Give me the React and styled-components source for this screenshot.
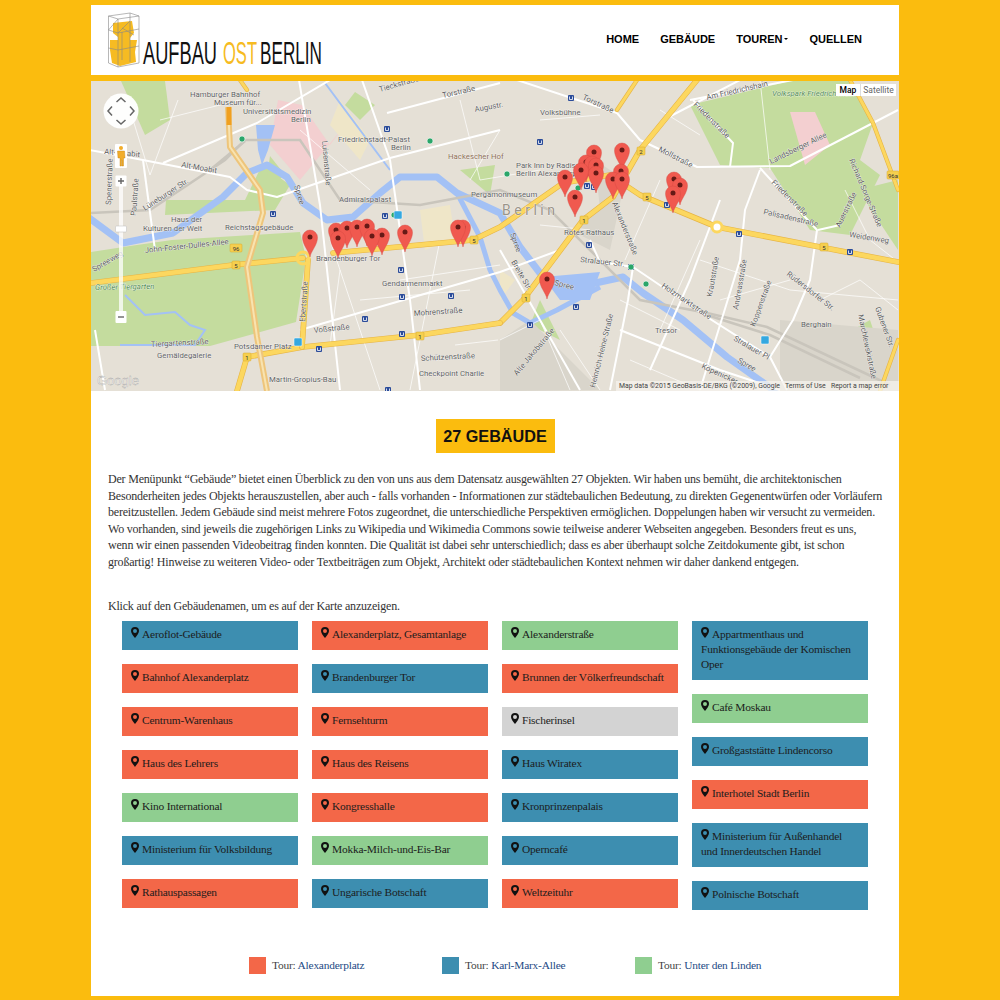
import React from "react";
import styled, { createGlobalStyle } from "styled-components";

const YELLOW = "#fbbc0e";
const COLORS = { o: "#f36748", b: "#3d8eb0", g: "#8fce90", x: "#d3d3d3" };

const Global = createGlobalStyle`
  html, body { margin: 0; padding: 0; background: ${YELLOW}; }
  body { font-family: "Liberation Serif", serif; }
`;
const Page = styled.div`
  width: 808px;
  margin-left: 91px;
  padding-top: 5px;
`;
const Header = styled.header`
  height: 70px;
  background: #fff;
  display: flex;
  align-items: center;
  justify-content: space-between;
  padding: 0 37px 0 17px;
`;
const Nav = styled.nav`
  display: flex;
  gap: 21px;
  margin-bottom: 2px;
`;
const NavLink = styled.a`
  font: bold 11px/16px "Liberation Sans", sans-serif;
  color: #000;
  display: flex;
  align-items: center;
  gap: 2px;
`;
const Caret = styled.span`
  width: 0;
  height: 0;
  border-left: 2.5px solid transparent;
  border-right: 2.5px solid transparent;
  border-top: 2.5px solid #000;
`;
const MapBox = styled.div`
  position: relative;
  height: 310px;
  margin-top: 6px;
  overflow: hidden;
  background: #e5e0d6;
`;
const MapSvg = styled.svg`
  display: block;
`;
const MapTypes = styled.div`
  position: absolute;
  top: 3px;
  right: 3px;
  display: flex;
  background: #fff;
  font: 8.5px/12px Roboto, sans-serif;
  text-align: center;
`;
const MapType = styled.span`
  width: ${(p) => (p.$on ? "24px" : "36px")};
  color: ${(p) => (p.$on ? "#000" : "#666")};
  font-weight: ${(p) => (p.$on ? 500 : 400)};
  border-left: ${(p) => (p.$on ? "0" : "1px solid #ddd")};
  box-sizing: border-box;
`;
const Attribution = styled.div`
  position: absolute;
  right: 0;
  bottom: 0;
  height: 10px;
  width: 283px;
  padding-left: 3px;
  box-sizing: border-box;
  background: rgba(245, 243, 238, 0.75);
  font: 6.9px/10px Roboto, sans-serif;
  color: #444;
  white-space: nowrap;
`;
const Content = styled.main`
  background: #fff;
  height: 605px;
  padding-top: 28px;
  box-sizing: border-box;
`;
const TitleRow = styled.div`
  display: flex;
  justify-content: center;
`;
const Title = styled.h1`
  margin: 0;
  height: 34px;
  width: 119px;
  background: ${YELLOW};
  font: bold 16.2px/35px "Liberation Sans", sans-serif;
  color: #111;
  text-align: center;
`;
const Intro = styled.p`
  margin: 18px 0 0 17px;
  font-size: 12px;
  letter-spacing: -0.2px;
  line-height: 16.6px;
  color: #333;
  white-space: nowrap;
`;
const Hint = styled.p`
  margin: 27px 0 0 17px;
  font-size: 12px;
  letter-spacing: -0.2px;
  line-height: 16px;
  color: #333;
`;
const Columns = styled.div`
  display: flex;
  gap: 14px;
  margin: 7px 0 0 31px;
`;
const Column = styled.div`
  width: 176px;
  display: flex;
  flex-direction: column;
  gap: 14px;
`;
const Building = styled.a`
  display: block;
  background: ${(p) => COLORS[p.$c]};
  padding: 6.500px 9px 7.500px;
  font-size: 11.4px;
  letter-spacing: -0.2px;
  line-height: 15px;
  color: #1c1c1c;
  box-sizing: border-box;
`;
const PinIcon = styled.svg`
  width: 8px;
  height: 11px;
  margin-right: 3px;
  vertical-align: 0;
`;
const Legend = styled.div`
  display: flex;
  margin: 47px 0 0 158px;
`;
const LegendItem = styled.div`
  width: 193px;
  display: flex;
  align-items: center;
  gap: 6px;
  font-size: 11.4px;
  letter-spacing: -0.2px;
  color: #444;
`;
const Swatch = styled.span`
  width: 17px;
  height: 17px;
  background: ${(p) => COLORS[p.$c]};
`;
const TourLink = styled.a`
  color: #1d4a85;
`;

const columns = [
  [["Aeroflot-Gebäude","b"],["Bahnhof Alexanderplatz","o"],["Centrum-Warenhaus","o"],["Haus des Lehrers","o"],["Kino International","g"],["Ministerium für Volksbildung","b"],["Rathauspassagen","o"]],
  [["Alexanderplatz, Gesamtanlage","o"],["Brandenburger Tor","b"],["Fernsehturm","o"],["Haus des Reisens","o"],["Kongresshalle","o"],["Mokka-Milch-und-Eis-Bar","g"],["Ungarische Botschaft","b"]],
  [["Alexanderstraße","g"],["Brunnen der Völkerfreundschaft","o"],["Fischerinsel","x"],["Haus Wiratex","b"],["Kronprinzenpalais","b"],["Operncafé","b"],["Weltzeituhr","o"]],
  [["Appartmenthaus und Funktionsgebäude der Komischen Oper","b"],["Café Moskau","g"],["Großgaststätte Lindencorso","b"],["Interhotel Stadt Berlin","o"],["Ministerium für Außenhandel und Innerdeutschen Handel","b"],["Polnische Botschaft","b"]],
];

const introLines = [
  "Der Menüpunkt “Gebäude” bietet einen Überblick zu den von uns aus dem Datensatz ausgewählten 27 Objekten. Wir haben uns bemüht, die architektonischen",
  "Besonderheiten jedes Objekts herauszustellen, aber auch - falls vorhanden - Informationen zur städtebaulichen Bedeutung, zu direkten Gegenentwürfen oder Vorläufern",
  "bereitzustellen. Jedem Gebäude sind meist mehrere Fotos zugeordnet, die unterschiedliche Perspektiven ermöglichen. Doppelungen haben wir versucht zu vermeiden.",
  "Wo vorhanden, sind jeweils die zugehörigen Links zu Wikipedia und Wikimedia Commons sowie teilweise anderer Webseiten angegeben. Besonders freut es uns,",
  "wenn wir einen passenden Videobeitrag finden konnten. Die Qualität ist dabei sehr unterschiedlich; dass es aber überhaupt solche Zeitdokumente gibt, ist schon",
  "großartig! Hinweise zu weiteren Video- oder Textbeiträgen zum Objekt, Architekt oder städtebaulichen Kontext nehmen wir daher dankend entgegen.",
];

const Pin = () => (
  <PinIcon viewBox="0 0 8 11">
    <path fillRule="evenodd" fill="#111" d="M4 0a4 4 0 0 0-4 4c0 2.400 2.600 5 4 7 1.400-2 4-4.600 4-7a4 4 0 0 0-4-4zm0 2a2 2 0 1 1 0 4 2 2 0 0 1 0-4z" />
  </PinIcon>
);

const Logo = () => (
  <svg width="220" height="60" viewBox="108 10 220 60">
    <path fill="#f6bb22" d="M113 23L132 21L134 33L130 38L130 40L137 40L135 52L136 62L120 66L112 63L110 50L110 40L118 40L118 37L113 33z" />
    <g fill="none" stroke="#888" strokeWidth=".6">
      <path d="M108.500 16L130 13L139 16V63L118 67L108.500 63z" />
      <path d="M108.500 16L118 19L139 16M118 19V67M130 13V62M108.500 30L118 33L139 29M108.500 48L118 50L139 46M118 19L108.500 30M118 33L130 21M122 28L134 35M122 32V60" />
    </g>
    <g fontFamily="'Liberation Sans', sans-serif" fontSize="31.500">
      <text x="143" y="64" fill="#111" textLength="74" lengthAdjust="spacingAndGlyphs">AUFBAU</text>
      <text x="223" y="64" fill="#f6bb22" textLength="34" lengthAdjust="spacingAndGlyphs">OST</text>
      <text x="260" y="64" fill="#111" textLength="62" lengthAdjust="spacingAndGlyphs">BERLIN</text>
    </g>
  </svg>
);

const Road = ({ d, w = 4.5 }) => (
  <g fill="none" strokeLinecap="round" strokeLinejoin="round">
    <path d={d} stroke="#e6b445" strokeWidth={w + 1.2} />
    <path d={d} stroke="#fcd75f" strokeWidth={w} />
  </g>
);

const whites = [
  "M90 150L143 160L230 177L247 190L277 197L390 158L500 130",
  "M163 163L257 123L330 80",
  "M387 113L500 83",
  "M517 80L617 113L640 140L697 167L790 166L898 110",
  "M690 100L793 80",
  "M693 100L733 143L730 167",
  "M760 168L817 230L810 280L793 320L770 357",
  "M633 267L707 317L770 357L787 390",
  "M590 240L600 262L633 267",
  "M633 267L628 300L610 390",
  "M143 160L155 250",
  "M299 80L320 205L340 390",
  "M362 80L390 160L410 300L420 390",
  "M500 250L580 390",
  "M300 330L500 272L560 250",
  "M720 200L690 280L650 370",
  "M95 330L105 390",
  "M663 120L740 80",
  "M840 225L818 230",
  "M760 170L745 210L740 260L700 390",
  "M620 330L720 370L780 390",
];
const thin = [
  "M330 240L380 390","M440 240L410 390","M130 110L150 175L178 100","M160 120L240 100","M300 130L370 190","M460 100L480 180L540 170",
  "M700 260L790 290L898 300","M820 300L860 280L898 310","M560 330L600 390","M500 340L540 320L570 390","M660 180L625 260","M700 240L660 330",
  "M720 300L790 280","M400 280L500 265","M340 270L330 345","M360 300L470 290","M455 345L498 340","M630 360L700 390","M620 300L680 330",
  "M845 190L870 240L898 262","M540 225L590 230","M600 115L540 120","M760 80L770 170","M470 180L500 130","M660 110L700 135",
];

const Label = ({ x, y, r, s = 7.8, c = "#5d5d5d", ls, it, children }) => (
  <text x={x} y={y} fontSize={s} fill={c} letterSpacing={ls} fontStyle={it ? "italic" : undefined} stroke="#fff" strokeWidth=".5" paintOrder="stroke"
    transform={r ? `rotate(${r} ${x} ${y})` : undefined}>{children}</text>
);

const labels = [
  [190,97,0,"Hamburger Bahnhof"],[214,105,0,"Museum für..."],[243,114,0,"Universitätsmedizin"],[291,122,0,"Berlin"],
  [338,142,0,"Friedrichstadt-Palast"],[391,150,0,"Berlin"],[339,202,0,"Admiralspalast"],
  [471,197,0,"Pergamonmuseum"],[171,222,0,"Haus der"],[143,231,0,"Kulturen der Welt"],[225,230,0,"Reichstagsgebäude"],
  [316,261,0,"Brandenburger Tor"],[382,286,0,"Gendarmenmarkt"],[414,316,-4,"Mohrenstraße"],[314,333,-6,"Voßstraße"],
  [151,347,-3,"Tiergartenstraße"],[157,358,0,"Gemäldegalerie"],[234,349,0,"Potsdamer Platz"],[421,361,-3,"Schützenstraße"],
  [419,376,0,"Checkpoint Charlie"],[269,382,0,"Martin-Gropius-Bau"],[104,154,5,"Alt-Moabit"],
  [181,167,10,"Alt-Moabit"],[145,211,-33,"Lüneburger Str."],[145,253,-6,"John-Foster-Dulles-Allee"],[94,272,-30,"Spreeweg"],
  [305,322,-86,"Ebertstraße"],[322,141,85,"Luisenstraße"],[294,186,72,"Spree"],[136,216,-86,"Paulstraße"],
  [111,205,-88,"Spenerstraße"],[380,92,-16,"Tieckstraße"],[443,98,-13,"Torstraße"],[475,112,-10,"Augustr."],
  [540,115,0,"Volksbühne"],[516,168,0,"Park Inn by Radisson"],[516,176,0,"Berlin Alexanderplatz"],[564,235,0,"Rotes Rathaus"],
  [580,262,6,"Stralauer Str."],[510,234,70,"Spree"],[511,262,60,"Breite Str."],[554,285,14,"Spree"],
  [582,99,25,"Torstraße"],[707,100,-13,"Am Friedrichshain"],[658,151,27,"Mollstraße"],[693,105,45,"Friedenstraße"],
  [771,164,-26,"Landsberger Allee"],[771,183,45,"Friedenstraße"],[763,214,13,"Palisadenstraße"],[849,237,9,"Weidenweg"],
  [849,160,67,"Richard-Sorge-Straße"],[840,228,-64,"Auerstraße"],[612,203,68,"Alexanderstraße"],[661,287,34,"Holzmarktstraße"],
  [733,340,30,"Stralauer Pl"],[712,297,-80,"Krautstraße"],[738,310,-80,"Andreasstraße"],[755,327,-70,"Koppenstraße"],
  [786,275,38,"Rüdersdorfer Str."],[801,327,0,"Berghain"],[655,333,0,"Tresor"],[517,376,-50,"Alte Jakobstraße"],
  [595,388,-76,"Heinrich-Heine-Straße"],[701,368,25,"Köpenicker"],[737,362,30,"Spree"],[858,315,78,"Marchlewskistraße"],
  [875,308,70,"Gubener Str."],
];

const pins = [
  [310,257],[336,250],[347,248],[357,247],[367,246],[382,255],[372,256],[338,258],[405,252],[463,247],[458,247],
  [594,172],[622,170],[586,182],[592,183],[596,185],[581,190],[596,193],[565,197],[575,217],[621,191],[613,199],[622,199],
  [674,199],[680,205],[673,213],[547,299],
];

const shields = [
  [236,248,"96",1],[236,265,"5",0],[247,357,"1",0],[420,336,"1",0],[474,240,"5",0],[647,197,"5",0],[641,151,"2",0],
  [584,220,"1",0],[526,298,"1",0],[824,247,"5",0],[893,175,"96a",1],
];
const ubahn = [
  [387,129],[273,214],[385,216],[401,270],[402,297],[365,319],[402,334],[319,349],[451,296],[571,98],[540,142],[587,186],[594,187],
  [667,205],[739,234],[589,245],[850,252],[631,267],[576,307],[530,325],[388,390],
];
const sbahn = [[242,139],[430,141],[394,215],[631,267],[646,284],[507,174],[578,188]];
const stations = [[398,215],[298,342],[765,340]];

const MapDrawing = () => (
  <MapSvg width="808" height="310" viewBox="91 81 808 310" fontFamily="Roboto, sans-serif">
    <rect x="91" y="81" width="808" height="310" fill="#e5e0d6" />
    <g fill="#c4dc9e">
      <path d="M91 252L130 246L172 240L300 232L306 258L296 322L210 346L91 346z" />
      <path d="M121 81L165 81L170 120L145 135z" />
      <path d="M166 200L245 200L262 165L290 185L275 210L165 215z" />
      <path d="M690 105L790 81L850 81L873 123L860 160L880 175L850 235L810 230L770 168L720 165z" />
      <path d="M355 92L375 105L360 120L345 105z" />
      <path d="M270 156L285 175L265 190z" />
      <path d="M835 340L870 320L880 350z" />
      <path d="M505 355L530 385L505 391z" />
      <path d="M540 300L560 340L530 325z" />
      <path d="M858 190L898 180L898 250z" />
      <path d="M460 170L495 165L490 195z" />
    </g>
    <path fill="#f3cfd0" d="M278 100L302 105L330 145L345 125L300 180L270 145z" />
    <path fill="#f3cfd0" d="M790 112L815 112L830 145L805 165z" />
    <path fill="#efe6c8" d="M340 100L370 140L360 160L330 125zM420 210L450 205L455 240L425 250zM500 300L500 270L515 280z" />
    <path fill="#d9d5cb" d="M595 160L625 180L610 250L570 230L600 210zM500 340L530 320L600 390L500 391zM780 320L898 330L898 391L780 391z" />
    <path fill="none" stroke="#a3c1f5" strokeWidth="7" strokeLinejoin="round" strokeLinecap="round"
      d="M85 215L123 243L173 233L223 197L247 173L267 165L287 177L303 203L327 220L353 217L380 193L400 177L437 177L457 193L500 213L520 247L543 277L577 287L623 277L643 293L683 320L727 357L775 391" />
    <path fill="none" stroke="#a3c1f5" strokeWidth="5" strokeLinejoin="round"
      d="M457 193L480 237L490 270L500 290L513 313L530 323L557 310L600 287" />
    <path fill="#a3c1f5" d="M256 125L275 125L268 150L262 165L258 150zM543 277L600 272L590 300L560 300z" />
    <path fill="none" stroke="#a3c1f5" strokeWidth="2" d="M125 295L145 315L175 312L190 325L205 330L195 345L120 345M325 83L360 130L390 170" />
    <g fill="none" stroke="#c9c5bc" strokeWidth="2.500">
      <path d="M90 213L150 210L225 160L245 140L300 140L340 200L420 205L500 190L550 210L590 250L640 300L707 313L767 327L890 385" />
      <path d="M710 316L770 335L860 378" />
      <path d="M210 170L245 141" />
    </g>
    <g fill="none" stroke="#fff" strokeOpacity=".7" strokeWidth="1">{thin.map((d) => <path key={d} d={d} />)}</g>
    <g fill="none" stroke="#fff" strokeWidth="2" strokeLinejoin="round">{whites.map((d) => <path key={d} d={d} />)}</g>
    <Road d="M91 283L233 265L303 258" />
    <Road d="M333 253L473 240L500 227L563 183L610 175L640 195L717 227L820 247L898 262" />
    <Road d="M500 323L523 300L583 220L613 197L640 150L697 80" />
    <Road d="M637 80L617 110" w={3} />
    <Road d="M237 391L247 357L303 347L420 335L500 323" />
    <Road d="M308 260L302 347" />
    <Road d="M850 80L873 123L898 190" w={3} />
    <Road d="M880 391L898 340" w={3} />
    <Road d="M240 80L247 90" w={3} />
    <circle cx="303" cy="258" r="6" fill="none" stroke="#fcd75f" strokeWidth="3" />
    <circle cx="717" cy="227" r="5" fill="#fff" stroke="#fcd75f" strokeWidth="3" />
    <g fill="none" strokeLinejoin="round">
      <path d="M228 107L230 147L260 190L263 213L247 267L257 337L267 391" stroke="#eec57b" strokeWidth="6" />
      <path d="M228 107L230 147L260 190L263 213L247 267L257 337L267 391" stroke="#f8e3b0" strokeWidth="2" />
      <path d="M229 107L229 125" stroke="#f0a020" strokeWidth="5" />
    </g>
    <g fontFamily="Roboto, sans-serif">
      {labels.map(([x, y, r, t]) => <Label key={t + x} x={x} y={y} r={r}>{t}</Label>)}
      <Label x={448} y={159} c="#8a6a50">Hackescher Hof</Label>
      <Label x={95} y={290} r={-1} c="#4f8a4f" it>Großer Tiergarten</Label>
      <Label x={772} y={96} c="#4f8a4f" it>Volkspark Friedrichshain</Label>
      <Label x={502} y={215} s={14} c="#9a948a" ls={3.500}>Berlin</Label>
    </g>
    {shields.map(([x, y, t, wide]) => (
      <g key={x + t}>
        <rect x={x - (wide ? 6 : 4)} y={y - 4} width={wide ? 12 : 8} height="8" rx="1" fill="#f5cf4f" stroke="#d9a92e" strokeWidth=".5" />
        <text x={x} y={y + 2.500} textAnchor="middle" fontSize="6" fill="#333">{t}</text>
      </g>
    ))}
    {ubahn.map(([x, y]) => (
      <g key={x + "," + y}>
        <rect x={x - 3} y={y - 3} width="6" height="6" rx="1" fill="#2b4c9a" />
        <path d="M-1.500-1.500V1.500H1.500V-1.500" transform={`translate(${x} ${y})`} fill="none" stroke="#fff" strokeWidth=".8" />
      </g>
    ))}
    {sbahn.map(([x, y]) => <circle key={x + "," + y} cx={x} cy={y} r="3" fill="#2aa66a" stroke="#fff" strokeWidth=".6" />)}
    {stations.map(([x, y]) => <rect key={x} x={x - 4} y={y - 4} width="8" height="8" rx="1" fill="#35a8e0" stroke="#fff" strokeWidth=".5" />)}
    <text x="97" y="385" fontSize="13" fontFamily="'Liberation Sans', sans-serif" fill="#fff" fillOpacity=".7" stroke="#999" strokeWidth=".3">Google</text>
    {pins.map(([x, y], i) => (
      <g key={i} transform={`translate(${x} ${y})`}>
        <path d="M0 0C-1-6-7.500-12-7.500-19.500A7.500 7.500 0 1 1 7.500-19.500C7.500-12 1-6 0 0z" fill="#f0594f" stroke="#d54a42" strokeWidth=".4" />
        <circle cy="-20" r="2.500" fill="#661a16" />
      </g>
    ))}
    <circle cx="121" cy="111" r="17.500" fill="#fff" fillOpacity=".95" />
    <path d="M116.500 102l4.500-4 4.500 4M116.500 120l4.500 4 4.500-4M112 106.500l-4 4.500 4 4.500M130 106.500l4 4.500-4 4.500" fill="none" stroke="#666" strokeWidth="1.500" />
    <rect x="115" y="144" width="12" height="24" rx="1" fill="#fff" />
    <circle cx="121" cy="148" r="2" fill="#f2ad2a" />
    <path d="M117.500 151h7l.5 7h-1.500v8h-1.500v-6h-.5v6H120v-8h-2z" fill="#f2ad2a" stroke="#c07e10" strokeWidth=".4" />
    <rect x="119" y="186" width="4" height="126" fill="#fff" fillOpacity=".75" />
    <rect x="115.500" y="175.500" width="11" height="11" rx="1" fill="#fff" />
    <path d="M118 181h6M121 178v6" stroke="#666" strokeWidth="1.400" />
    <rect x="115.500" y="226" width="11" height="6" rx="1" fill="#fff" stroke="#bbb" strokeWidth=".5" />
    <rect x="115.500" y="311" width="11" height="12" rx="1" fill="#fff" />
    <path d="M118 317h6" stroke="#666" strokeWidth="1.400" />
  </MapSvg>
);

export default function App() {
  return (
    <Page>
      <Global />
      <Header>
        <Logo />
        <Nav>
          <NavLink>HOME</NavLink>
          <NavLink>GEBÄUDE</NavLink>
          <NavLink>TOUREN<Caret /></NavLink>
          <NavLink>QUELLEN</NavLink>
        </Nav>
      </Header>
      <MapBox>
        <MapDrawing />
        <MapTypes>
          <MapType $on>Map</MapType>
          <MapType>Satellite</MapType>
        </MapTypes>
        <Attribution>Map data ©2015 GeoBasis-DE/BKG (©2009), Google &nbsp; Terms of Use &nbsp; Report a map error</Attribution>
      </MapBox>
      <Content>
        <TitleRow><Title>27 GEBÄUDE</Title></TitleRow>
        <Intro>{introLines.map((l) => <React.Fragment key={l}>{l}<br /></React.Fragment>)}</Intro>
        <Hint>Klick auf den Gebäudenamen, um es auf der Karte anzuzeigen.</Hint>
        <Columns>
          {columns.map((col, i) => (
            <Column key={i}>
              {col.map(([name, c]) => (
                <Building key={name} $c={c}><Pin />{name}</Building>
              ))}
            </Column>
          ))}
        </Columns>
        <Legend>
          <LegendItem><Swatch $c="o" /><span>Tour: <TourLink>Alexanderplatz</TourLink></span></LegendItem>
          <LegendItem><Swatch $c="b" /><span>Tour: <TourLink>Karl-Marx-Allee</TourLink></span></LegendItem>
          <LegendItem><Swatch $c="g" /><span>Tour: <TourLink>Unter den Linden</TourLink></span></LegendItem>
        </Legend>
      </Content>
    </Page>
  );
}
